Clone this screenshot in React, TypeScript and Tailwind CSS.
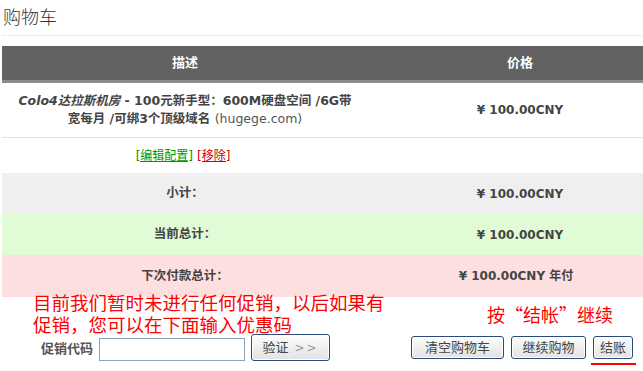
const cjk = '"DejaVu Sans", "Noto Sans CJK SC", sans-serif';

function Btn({ label, className }: { label: React.ReactNode; className: string }) {
  return (
    <button
      className={`rounded-[3px] border border-[#2a4a78] bg-gradient-to-b from-[#fdfdfd] to-[#e2e2e2] text-[13px] leading-none text-[#444] shadow-[inset_0_0_0_1px_#fff] ${className}`}
    >
      {label}
    </button>
  );
}

export default function App() {
  return (
    <div
      className="relative h-[371px] w-[643px] overflow-hidden bg-white text-[#444]"
      style={{ fontFamily: cjk }}
    >
      <div className="ml-[2px] h-[36px] border-b border-dotted border-[#dcdcdc] pl-[1px] pt-[5px]">
        <h1 className="text-[18px] font-light leading-[22px] text-[#333]" style={{ fontFamily: '"Noto Sans CJK SC", sans-serif' }}>
          购物车
        </h1>
      </div>

      <div className="ml-[2px] mt-[10px] w-[670px]">
        <div className="grid h-[37px] grid-cols-[366px_1fr] items-center border-b-[3px] border-[#8c8c8c] bg-[#626262] text-[13px] font-bold text-white">
          <div className="text-center">描述</div>
          <div className="text-center">价格</div>
        </div>

        <div className="grid h-[55px] grid-cols-[366px_1fr] items-center border-b border-[#e2e2e2] text-[12.5px] font-bold">
          <div className="text-center leading-[18px]">
            <div>
              <i>Colo4达拉斯机房</i> - 100元新手型：600M硬盘空间 /6G带
            </div>
            <div>
              宽每月 /可绑3个顶级域名 <span className="font-normal text-[#555]">(hugege.com)</span>
            </div>
          </div>
          <div className="text-center text-[12px]">¥ 100.00CNY</div>
        </div>

        <div className="grid h-[35px] grid-cols-[366px_1fr] items-center text-[12px]">
          <div className="flex justify-center gap-[4px] pr-[4px]">
            <span className="text-[#009900] underline">[编辑配置]</span>
            <span className="text-[#cc0000] underline">[移除]</span>
          </div>
          <div />
        </div>

        <div className="grid h-[41px] grid-cols-[366px_1fr] items-center bg-[#efefef] text-[12.5px] font-bold">
          <div className="text-center">小计：</div>
          <div className="text-center text-[12px]">¥ 100.00CNY</div>
        </div>
        <div className="grid h-[41px] grid-cols-[366px_1fr] items-center bg-[#e0fbd5] text-[12.5px] font-bold">
          <div className="text-center">当前总计：</div>
          <div className="text-center text-[12px]">¥ 100.00CNY</div>
        </div>
        <div className="grid h-[42px] grid-cols-[366px_1fr] items-center bg-[#fddfdf] text-[12.5px] font-bold">
          <div className="text-center">下次付款总计：</div>
          <div className="pr-[8px] text-center text-[12px]">¥ 100.00CNY 年付</div>
        </div>
      </div>

      <div className="mt-[37px] flex h-[27px] items-end">
        <span className="mb-[3px] ml-[41px] text-[13px] font-bold text-[#555]">促销代码</span>
        <input className="ml-[6px] h-[23px] w-[146px] border border-[#8aa4c0] bg-white outline-none" />
        <Btn
          className="ml-[6px] h-[27px] w-[79px]"
          label={
            <span>
              验证 <span className="ml-[2px] text-[12px] tracking-[2px] text-[#999]">&gt;&gt;</span>
            </span>
          }
        />
        <div className="mb-[2px] ml-[81px] flex gap-[7px]">
          <Btn className="h-[23px] w-[93px]" label="清空购物车" />
          <Btn className="h-[23px] w-[75px]" label="继续购物" />
          <Btn className="h-[23px] w-[40px]" label="结账" />
        </div>
      </div>

      <div
        className="absolute left-[33px] top-[291px] text-[18.5px] leading-[22px] text-[#ff0000]"
        style={{ fontFamily: '"Noto Sans CJK SC", sans-serif' }}
      >
        <div>目前我们暂时未进行任何促销，以后如果有</div>
        <div>促销，您可以在下面输入优惠码</div>
      </div>
      <div
        className="absolute left-[487px] top-[304px] text-[18px] leading-[21px] text-[#ff0000]"
        style={{ fontFamily: '"Noto Sans CJK SC", sans-serif' }}
      >
        按“结帐”继续
      </div>
      <div className="absolute left-[591px] top-[363px] h-[2px] w-[45px] bg-[#ff0000]" />
    </div>
  );
}
